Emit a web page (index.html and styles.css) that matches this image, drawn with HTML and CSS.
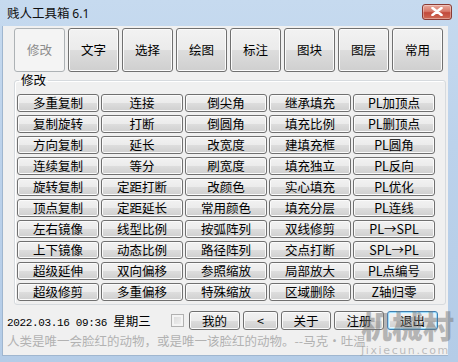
FILE: index.html
```html
<!DOCTYPE html>
<html lang="zh">
<head>
<meta charset="utf-8">
<title>贱人工具箱 6.1</title>
<link rel="stylesheet" href="styles.css">
</head>
<body>
<div class="window">
  <div class="titlebar">
    <span class="title">贱人工具箱 <span class="ver">6.1</span></span>
    <span class="close"><svg width="12" height="9" viewBox="0 0 12 9"><path d="M1.5 1 L10.5 8 M10.5 1 L1.5 8" stroke="#fff" stroke-width="2.6" stroke-linecap="round"/></svg></span>
  </div>
  <div class="client">
    <div class="tabs">
      <button class="btn tab disabled">修改</button>
      <button class="btn tab">文字</button>
      <button class="btn tab">选择</button>
      <button class="btn tab">绘图</button>
      <button class="btn tab">标注</button>
      <button class="btn tab">图块</button>
      <button class="btn tab">图层</button>
      <button class="btn tab">常用</button>
    </div>
    <fieldset class="group">
      <legend>修改</legend>
      <div class="grid">
        <button class="btn cmd">多重复制</button><button class="btn cmd">连接</button><button class="btn cmd">倒尖角</button><button class="btn cmd">继承填充</button><button class="btn cmd">PL加顶点</button>
        <button class="btn cmd">复制旋转</button><button class="btn cmd">打断</button><button class="btn cmd">倒圆角</button><button class="btn cmd">填充比例</button><button class="btn cmd">PL删顶点</button>
        <button class="btn cmd">方向复制</button><button class="btn cmd">延长</button><button class="btn cmd">改宽度</button><button class="btn cmd">建填充框</button><button class="btn cmd">PL圆角</button>
        <button class="btn cmd">连续复制</button><button class="btn cmd">等分</button><button class="btn cmd">刷宽度</button><button class="btn cmd">填充独立</button><button class="btn cmd">PL反向</button>
        <button class="btn cmd">旋转复制</button><button class="btn cmd">定距打断</button><button class="btn cmd">改颜色</button><button class="btn cmd">实心填充</button><button class="btn cmd">PL优化</button>
        <button class="btn cmd">顶点复制</button><button class="btn cmd">定距延长</button><button class="btn cmd">常用颜色</button><button class="btn cmd">填充分层</button><button class="btn cmd">PL连线</button>
        <button class="btn cmd">左右镜像</button><button class="btn cmd">线型比例</button><button class="btn cmd">按弧阵列</button><button class="btn cmd">双线修剪</button><button class="btn cmd">PL→SPL</button>
        <button class="btn cmd">上下镜像</button><button class="btn cmd">动态比例</button><button class="btn cmd">路径阵列</button><button class="btn cmd">交点打断</button><button class="btn cmd">SPL→PL</button>
        <button class="btn cmd">超级延伸</button><button class="btn cmd">双向偏移</button><button class="btn cmd">参照缩放</button><button class="btn cmd">局部放大</button><button class="btn cmd">PL点编号</button>
        <button class="btn cmd">超级修剪</button><button class="btn cmd">多重偏移</button><button class="btn cmd">特殊缩放</button><button class="btn cmd">区域删除</button><button class="btn cmd">Z轴归零</button>
      </div>
    </fieldset>
    <div class="bottom">
      <span class="date">2022.03.16 09:36 <span class="week">星期三</span></span>
      <span class="check"></span>
      <button class="btn small w51">我的</button>
      <button class="btn small w35">&lt;</button>
      <button class="btn small w50">关于</button>
      <button class="btn small w50">注册</button>
      <button class="btn small w51 default">退出</button>
    </div>
    <div class="quote">人类是唯一会脸红的动物，或是唯一该脸红的动物。--马克·吐温</div>
  </div>
  <div class="watermark">
    <div class="wm-big">机械村</div>
    <div class="wm-small">Jixiecun.com</div>
  </div>
</div>
</body>
</html>
```
FILE: styles.css
```css
* { box-sizing: border-box; }
html, body { margin: 0; padding: 0; background: #fff; }
body { font-family: "Noto Sans CJK SC", "Noto Sans", sans-serif; font-size: 12px; color: #000; }

.window {
  position: relative;
  width: 458px;
  height: 362px;
  display: flex;
  flex-direction: column;
  background: linear-gradient(180deg, #c6daef 0%, #bcd2eb 40%, #b4cce7 100%);
  overflow: hidden;
}

.titlebar {
  height: 26px;
  flex: 0 0 26px;
  display: flex;
  align-items: center;
  justify-content: space-between;
  padding: 0 6px 0 7px;
}
.title { font-size: 12.5px; color: #101010; line-height: 14px; }
.ver { font-family: "Noto Sans", "DejaVu Sans", sans-serif; font-size: 12px; }
.close {
  width: 30px;
  height: 16px;
  margin-top: -3px;
  display: flex;
  align-items: center;
  justify-content: center;
  border: 1px solid #8a3a34;
  border-radius: 3px;
  background: linear-gradient(180deg, #e8a99c 0%, #d87a6b 45%, #c24a3c 55%, #cf6a55 100%);
  box-shadow: inset 0 0 0 1px rgba(255,255,255,0.35);
}

.client {
  flex: 1;
  margin: 0 10px 6px 2px;
  background: #f0f0f0;
  border-left: 1px solid #9fb6cf;
  border-bottom: 1px solid #9fb6cf;
  display: flex;
  flex-direction: column;
}

.btn {
  font-family: "Noto Sans CJK SC", "Noto Sans", sans-serif;
  font-size: 12.5px;
  color: #000;
  padding: 0;
  margin: 0;
  border: 1px solid #707070;
  border-radius: 3px;
  background: linear-gradient(180deg, #f2f2f2 0%, #ebebeb 50%, #dddddd 51%, #cfcfcf 100%);
  box-shadow: inset 0 0 0 1px #fbfbfb;
  display: flex;
  align-items: center;
  justify-content: center;
  line-height: 14px;
  white-space: nowrap;
}

.tabs {
  display: flex;
  gap: 3px;
  padding: 2px 0 0 11px;
}
.tab { width: 51px; height: 44px; }
.tab.disabled {
  border-color: #adb2b5;
  background: #f4f4f4;
  box-shadow: none;
  color: #8d8d8d;
}

.group {
  margin: 1px 0 0 11px;
  width: 432px;
  padding: 7px 2px 3px 2px;
  border: 1px solid #d6dade;
  border-radius: 3px;
  box-shadow: 1px 1px 0 #fff inset;
}
.group legend {
  padding: 0 2px;
  margin-left: 2px;
  font-size: 12.5px;
  line-height: 14px;
}

.grid {
  display: grid;
  grid-template-columns: repeat(5, 82px);
  grid-auto-rows: 18px;
  column-gap: 2px;
  row-gap: 3px;
}
.cmd { width: 82px; height: 18px; }

.bottom {
  display: flex;
  align-items: center;
  margin-top: 6px;
  padding-left: 4px;
  height: 19px;
}
.date {
  width: 164px;
  font-family: "Liberation Mono", "DejaVu Sans Mono", monospace;
  font-size: 11px;
  letter-spacing: -0.35px;
  color: #000;
  white-space: nowrap;
}
.week { font-family: "Noto Sans CJK SC", sans-serif; font-size: 12.5px; letter-spacing: 0; }
.check {
  width: 13px;
  height: 13px;
  border: 1px solid #b1b1b1;
  background: linear-gradient(135deg, #d8d8d8 0%, #f3f3f3 100%);
  box-shadow: inset 0 0 0 2px #f4f4f4;
  margin-right: 5px;
}
.bottom .btn { margin-right: 3px; }
.small { height: 19px; }
.w51 { width: 51px; }
.w50 { width: 50px; }
.w35 { width: 35px; }
.default {
  border-color: #3c7fb1;
  box-shadow: inset 0 0 0 1px #9fdcfa, inset 0 0 0 2px #e3f4fc;
}

.quote {
  margin-top: 4px;
  padding-left: 4px;
  font-size: 12.5px;
  line-height: 14px;
  color: #b2b2b2;
  white-space: nowrap;
}

.watermark {
  position: absolute;
  left: 361px;
  top: 305px;
  color: rgba(120, 120, 120, 0.5);
  pointer-events: none;
}
.wm-big {
  font-family: "Noto Sans CJK SC", sans-serif;
  font-weight: 900;
  font-size: 31px;
  line-height: 40px;
  letter-spacing: 0;
}
.wm-small {
  font-family: "DejaVu Sans", sans-serif;
  font-size: 11px;
  line-height: 12px;
  letter-spacing: 1.6px;
  color: rgba(150, 150, 150, 0.6);
}
```
